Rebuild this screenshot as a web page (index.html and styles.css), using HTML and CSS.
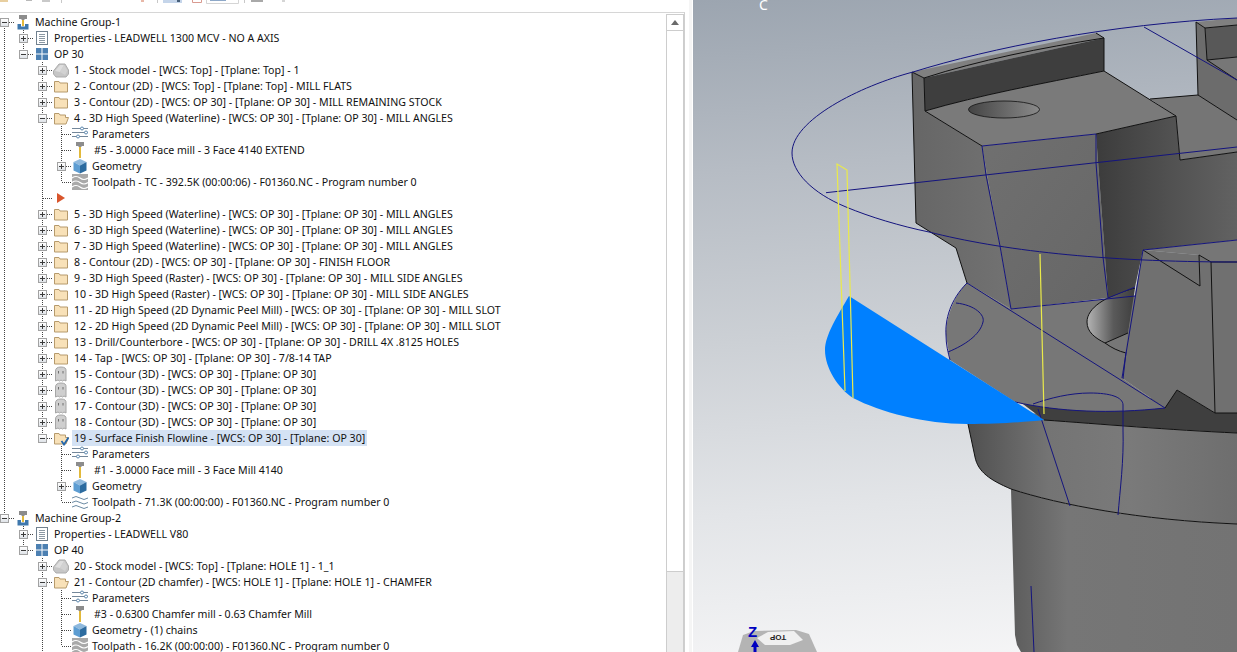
FILE: index.html
```html
<!DOCTYPE html>
<html lang="en">
<head>
<meta charset="utf-8">
<title>Toolpaths</title>
<link rel="stylesheet" href="styles.css">
</head>
<body>
<svg class="defs" width="0" height="0" aria-hidden="true">
  <symbol id="machine" viewBox="0 0 16 16"><path d="M4 1h8v4H9.500v1h-3V5H4z" fill="#8c8c8c"/><rect x="7" y="6" width="2" height="6" fill="#e2b93b"/><path d="M2.500 10H6v2.500h4V10h3.500v5.500h-11z" fill="#3f78ad"/></symbol>
  <symbol id="props" viewBox="0 0 16 16"><rect x="2.500" y="1.500" width="11" height="13" fill="#fff" stroke="#71818f"/><path d="M5 4.500h6M5 6.500h6M5 8.500h6M5 10.500h6M5 12.500h6" stroke="#8b98a3"/></symbol>
  <symbol id="op" viewBox="0 0 16 16"><path d="M2 2h5.500v5.500H2zM8.500 2H14v5.500H8.500zM2 8.500h5.500V14H2zM8.500 8.500H14V14H8.500z" fill="#4c80b2"/></symbol>
  <symbol id="stock" viewBox="0 0 16 16"><path d="M0.500 9 6 2h6l3.500 6v4L13 15H3l-2.500-3z" fill="#c6c6c6" stroke="#adadad"/><path d="M2 9 7 3h4l-4 7z" fill="#dedede"/><path d="M7 10l4-7 3.500 5.500L12 13z" fill="#d2d2d2"/></symbol>
  <symbol id="folder" viewBox="0 0 16 16"><path d="M1.500 14V3.500H6L7 5h7.500v9z" fill="#f8e1b8" stroke="#b69a6c"/></symbol>
  <symbol id="open" viewBox="0 0 16 16"><path d="M1.500 14V3.500H6L7 5h5.500v2.500h3L13 14z" fill="#f8e1b8" stroke="#b69a6c"/></symbol>
  <symbol id="check" viewBox="0 0 16 16"><path d="M1.500 14V3.500H6L7 5h5.500v2.500h3L13 14z" fill="#f8e1b8" stroke="#b69a6c"/><path d="M8.500 11l2.500 3.500 4.500-7" fill="none" stroke="#2467ad" stroke-width="1.800"/></symbol>
  <symbol id="params" viewBox="0 0 16 16"><path d="M0 2.500h16M0 6.500h16M0 10.500h16" stroke="#74879a"/><circle cx="10" cy="2.500" r="1.500" fill="#fff" stroke="#5c87ad"/><circle cx="14" cy="6.500" r="1.500" fill="#fff" stroke="#5c87ad"/><circle cx="6" cy="10.500" r="1.500" fill="#fff" stroke="#5c87ad"/></symbol>
  <symbol id="tool" viewBox="0 0 16 16"><path d="M4 0h8v4H9.500v1h-3V4H4z" fill="#8c8c8c"/><rect x="7" y="5" width="2" height="11" fill="#e2b93b"/></symbol>
  <symbol id="geo" viewBox="0 0 16 16"><path d="M1.500 4l6.500-3 6.500 3L8 7.500z" fill="#8fb9dd"/><path d="M1.500 4 8 7.500V15.500l-6.500-3z" fill="#5d9dd2"/><path d="M14.500 4 8 7.500V15.500l6.500-3z" fill="#2c6b9f"/></symbol>
  <symbol id="path" viewBox="0 0 16 16"><rect width="16" height="16" fill="#a9a9a9"/><path d="M0 4q4-3 8 0t8 0M0 8.500q4-3 8 0t8 0M0 13q4-3 8 0t8 0" fill="none" stroke="#fff" stroke-width="1.200"/></symbol>
  <symbol id="wave" viewBox="0 0 16 16"><path d="M0 4q4-3 8 0t8 0M0 8.500q4-3 8 0t8 0M0 13q4-3 8 0t8 0" fill="none" stroke="#6b8aa3"/></symbol>
  <symbol id="play" viewBox="0 0 16 16"><path d="M4 3l8 5-8 5z" fill="#d9552c"/></symbol>
  <symbol id="ghost" viewBox="0 0 16 16"><path d="M2.500 15V5q0-4 5.500-4t5 4v10l-2-1-1.500 1-1.500-1-1.500 1-1.500-1z" fill="#cfcfcf" stroke="#a6a6a6"/><path d="M5.500 5v2.500M10 5v2.500" stroke="#6e6e6e"/></symbol>
</svg>
<div class="app">
  <div class="side">
    <div class="pane">
      <svg class="toolbar" width="300" height="12" viewBox="0 0 300 12">
        <rect x="0" y="0" width="8" height="2" fill="#e8cfa0"/>
        <rect x="26" y="0" width="6" height="1" fill="#b9b9b9"/>
        <rect x="42" y="0" width="8" height="2" fill="#c9c9c9"/>
        <rect x="61" y="0" width="1" height="3" fill="#c8c8c8"/>
        <rect x="141" y="0" width="3" height="2" fill="#e8b8a8"/>
        <rect x="157" y="0" width="1" height="3" fill="#c8c8c8"/>
        <rect x="163" y="0" width="19" height="3" fill="#c5d5ea"/>
        <rect x="177" y="0" width="3" height="2" fill="#48607a"/>
        <path d="M192.500 0v2.500h9V0" fill="none" stroke="#d99a90"/>
        <path d="M206.500 0v3.500h32V0" fill="#fff" stroke="#d5d5d5"/>
        <rect x="210" y="0" width="16" height="1" fill="#8ea8c8"/>
        <rect x="244" y="0" width="1" height="3" fill="#c8c8c8"/>
        <rect x="251" y="0" width="12" height="2" fill="#a9a9a9"/>
        <rect x="282" y="0" width="3" height="2" fill="#d5d5d5"/>
      </svg>
      <div class="panel">
        <div class="tree">
          <div class="row"><span class="c top"><i class="x minus"></i></span><svg class="i"><use href="#machine"/></svg><span class="t">Machine Group-1</span></div>
          <div class="row"><span class="g"></span><span class="c tee"><i class="x plus"></i></span><svg class="i"><use href="#props"/></svg><span class="t">Properties - LEADWELL 1300 MCV - NO A AXIS</span></div>
          <div class="row"><span class="g"></span><span class="c ell"><i class="x minus"></i></span><svg class="i"><use href="#op"/></svg><span class="t">OP 30</span></div>
          <div class="row"><span class="g"></span><span class="n"></span><span class="c tee"><i class="x plus"></i></span><svg class="i"><use href="#stock"/></svg><span class="t">1 - Stock model - [WCS: Top] - [Tplane: Top] - 1</span></div>
          <div class="row"><span class="g"></span><span class="n"></span><span class="c tee"><i class="x plus"></i></span><svg class="i"><use href="#folder"/></svg><span class="t">2 - Contour (2D) - [WCS: Top] - [Tplane: Top] - MILL FLATS</span></div>
          <div class="row"><span class="g"></span><span class="n"></span><span class="c tee"><i class="x plus"></i></span><svg class="i"><use href="#folder"/></svg><span class="t">3 - Contour (2D) - [WCS: OP 30] - [Tplane: OP 30] - MILL REMAINING STOCK</span></div>
          <div class="row"><span class="g"></span><span class="n"></span><span class="c tee"><i class="x minus"></i></span><svg class="i"><use href="#open"/></svg><span class="t">4 - 3D High Speed (Waterline) - [WCS: OP 30] - [Tplane: OP 30] - MILL ANGLES</span></div>
          <div class="row"><span class="g"></span><span class="n"></span><span class="g"></span><span class="c tee"></span><svg class="i"><use href="#params"/></svg><span class="t">Parameters</span></div>
          <div class="row"><span class="g"></span><span class="n"></span><span class="g"></span><span class="c tee"></span><svg class="i"><use href="#tool"/></svg><span class="t tool">#5 - 3.0000 Face mill - 3 Face 4140 EXTEND</span></div>
          <div class="row"><span class="g"></span><span class="n"></span><span class="g"></span><span class="c tee"><i class="x plus"></i></span><svg class="i"><use href="#geo"/></svg><span class="t">Geometry</span></div>
          <div class="row"><span class="g"></span><span class="n"></span><span class="g"></span><span class="c ell"></span><svg class="i"><use href="#path"/></svg><span class="t">Toolpath - TC - 392.5K (00:00:06) - F01360.NC - Program number 0</span></div>
          <div class="row"><span class="g"></span><span class="n"></span><span class="c tee"></span><svg class="i"><use href="#play"/></svg></div>
          <div class="row"><span class="g"></span><span class="n"></span><span class="c tee"><i class="x plus"></i></span><svg class="i"><use href="#folder"/></svg><span class="t">5 - 3D High Speed (Waterline) - [WCS: OP 30] - [Tplane: OP 30] - MILL ANGLES</span></div>
          <div class="row"><span class="g"></span><span class="n"></span><span class="c tee"><i class="x plus"></i></span><svg class="i"><use href="#folder"/></svg><span class="t">6 - 3D High Speed (Waterline) - [WCS: OP 30] - [Tplane: OP 30] - MILL ANGLES</span></div>
          <div class="row"><span class="g"></span><span class="n"></span><span class="c tee"><i class="x plus"></i></span><svg class="i"><use href="#folder"/></svg><span class="t">7 - 3D High Speed (Waterline) - [WCS: OP 30] - [Tplane: OP 30] - MILL ANGLES</span></div>
          <div class="row"><span class="g"></span><span class="n"></span><span class="c tee"><i class="x plus"></i></span><svg class="i"><use href="#folder"/></svg><span class="t">8 - Contour (2D) - [WCS: OP 30] - [Tplane: OP 30] - FINISH FLOOR</span></div>
          <div class="row"><span class="g"></span><span class="n"></span><span class="c tee"><i class="x plus"></i></span><svg class="i"><use href="#folder"/></svg><span class="t">9 - 3D High Speed (Raster) - [WCS: OP 30] - [Tplane: OP 30] - MILL SIDE ANGLES</span></div>
          <div class="row"><span class="g"></span><span class="n"></span><span class="c tee"><i class="x plus"></i></span><svg class="i"><use href="#folder"/></svg><span class="t">10 - 3D High Speed (Raster) - [WCS: OP 30] - [Tplane: OP 30] - MILL SIDE ANGLES</span></div>
          <div class="row"><span class="g"></span><span class="n"></span><span class="c tee"><i class="x plus"></i></span><svg class="i"><use href="#folder"/></svg><span class="t">11 - 2D High Speed (2D Dynamic Peel Mill) - [WCS: OP 30] - [Tplane: OP 30] - MILL SLOT</span></div>
          <div class="row"><span class="g"></span><span class="n"></span><span class="c tee"><i class="x plus"></i></span><svg class="i"><use href="#folder"/></svg><span class="t">12 - 2D High Speed (2D Dynamic Peel Mill) - [WCS: OP 30] - [Tplane: OP 30] - MILL SLOT</span></div>
          <div class="row"><span class="g"></span><span class="n"></span><span class="c tee"><i class="x plus"></i></span><svg class="i"><use href="#folder"/></svg><span class="t">13 - Drill/Counterbore - [WCS: OP 30] - [Tplane: OP 30] - DRILL 4X .8125 HOLES</span></div>
          <div class="row"><span class="g"></span><span class="n"></span><span class="c tee"><i class="x plus"></i></span><svg class="i"><use href="#folder"/></svg><span class="t">14 - Tap - [WCS: OP 30] - [Tplane: OP 30] - 7/8-14 TAP</span></div>
          <div class="row"><span class="g"></span><span class="n"></span><span class="c tee"><i class="x plus"></i></span><svg class="i"><use href="#ghost"/></svg><span class="t">15 - Contour (3D) - [WCS: OP 30] - [Tplane: OP 30]</span></div>
          <div class="row"><span class="g"></span><span class="n"></span><span class="c tee"><i class="x plus"></i></span><svg class="i"><use href="#ghost"/></svg><span class="t">16 - Contour (3D) - [WCS: OP 30] - [Tplane: OP 30]</span></div>
          <div class="row"><span class="g"></span><span class="n"></span><span class="c tee"><i class="x plus"></i></span><svg class="i"><use href="#ghost"/></svg><span class="t">17 - Contour (3D) - [WCS: OP 30] - [Tplane: OP 30]</span></div>
          <div class="row"><span class="g"></span><span class="n"></span><span class="c tee"><i class="x plus"></i></span><svg class="i"><use href="#ghost"/></svg><span class="t">18 - Contour (3D) - [WCS: OP 30] - [Tplane: OP 30]</span></div>
          <div class="row"><span class="g"></span><span class="n"></span><span class="c ell"><i class="x minus"></i></span><svg class="i"><use href="#check"/></svg><span class="t sel">19 - Surface Finish Flowline - [WCS: OP 30] - [Tplane: OP 30]</span></div>
          <div class="row"><span class="g"></span><span class="n"></span><span class="n"></span><span class="c tee"></span><svg class="i"><use href="#params"/></svg><span class="t">Parameters</span></div>
          <div class="row"><span class="g"></span><span class="n"></span><span class="n"></span><span class="c tee"></span><svg class="i"><use href="#tool"/></svg><span class="t tool">#1 - 3.0000 Face mill - 3 Face Mill 4140</span></div>
          <div class="row"><span class="g"></span><span class="n"></span><span class="n"></span><span class="c tee"><i class="x plus"></i></span><svg class="i"><use href="#geo"/></svg><span class="t">Geometry</span></div>
          <div class="row"><span class="g"></span><span class="n"></span><span class="n"></span><span class="c ell"></span><svg class="i"><use href="#wave"/></svg><span class="t">Toolpath - 71.3K (00:00:00) - F01360.NC - Program number 0</span></div>
          <div class="row"><span class="c ell"><i class="x minus"></i></span><svg class="i"><use href="#machine"/></svg><span class="t">Machine Group-2</span></div>
          <div class="row"><span class="n"></span><span class="c tee"><i class="x plus"></i></span><svg class="i"><use href="#props"/></svg><span class="t">Properties - LEADWELL V80</span></div>
          <div class="row"><span class="n"></span><span class="c ell"><i class="x minus"></i></span><svg class="i"><use href="#op"/></svg><span class="t">OP 40</span></div>
          <div class="row"><span class="n"></span><span class="n"></span><span class="c tee"><i class="x plus"></i></span><svg class="i"><use href="#stock"/></svg><span class="t">20 - Stock model - [WCS: Top] - [Tplane: HOLE 1] - 1_1</span></div>
          <div class="row"><span class="n"></span><span class="n"></span><span class="c tee"><i class="x minus"></i></span><svg class="i"><use href="#open"/></svg><span class="t">21 - Contour (2D chamfer) - [WCS: HOLE 1] - [Tplane: HOLE 1] - CHAMFER</span></div>
          <div class="row"><span class="n"></span><span class="n"></span><span class="g"></span><span class="c tee"></span><svg class="i"><use href="#params"/></svg><span class="t">Parameters</span></div>
          <div class="row"><span class="n"></span><span class="n"></span><span class="g"></span><span class="c tee"></span><svg class="i"><use href="#tool"/></svg><span class="t tool">#3 - 0.6300 Chamfer mill - 0.63 Chamfer Mill</span></div>
          <div class="row"><span class="n"></span><span class="n"></span><span class="g"></span><span class="c tee"></span><svg class="i"><use href="#geo"/></svg><span class="t">Geometry - (1) chains</span></div>
          <div class="row"><span class="n"></span><span class="n"></span><span class="g"></span><span class="c ell"></span><svg class="i"><use href="#path"/></svg><span class="t">Toolpath - 16.2K (00:00:00) - F01360.NC - Program number 0</span></div>
        </div>
        <div class="scrollbar">
          <div class="sb-up"><i class="sb-arrow"></i></div>
          <div class="sb-thumb"></div>
          <div class="sb-track"></div>
        </div>
      </div>
    </div>
    <div class="gutter"><div class="gutter-line"></div></div>
  </div>
  <div class="view">
    <svg class="scene" viewBox="693 0 544 652" width="544" height="652">
      <defs>
        <linearGradient id="holeA" x1="0" x2="1" y1="0" y2="0"><stop offset="0" stop-color="#444"/><stop offset="1" stop-color="#8a8a8a"/></linearGradient>
        <linearGradient id="holeB" x1="0" x2="1" y1="0" y2="0"><stop offset="0" stop-color="#b4b4b4"/><stop offset=".55" stop-color="#5a5a5a"/><stop offset="1" stop-color="#3e3e3e"/></linearGradient>
        <linearGradient id="darkFace" x1="0" x2="1" y1="0" y2="0"><stop offset="0" stop-color="#3c3c3c"/><stop offset=".5" stop-color="#505050"/><stop offset="1" stop-color="#626262"/></linearGradient>
        <linearGradient id="leftFace" x1="0" x2="1" y1="0" y2="0"><stop offset="0" stop-color="#666"/><stop offset="1" stop-color="#727272"/></linearGradient>
        <linearGradient id="frontFace" x1="0" x2="1" y1="0" y2="1"><stop offset="0" stop-color="#707070"/><stop offset="1" stop-color="#666"/></linearGradient>
        <linearGradient id="collar" x1="968" x2="1237" y1="0" y2="0" gradientUnits="userSpaceOnUse"><stop offset="0" stop-color="#505050"/><stop offset=".3" stop-color="#747474"/><stop offset=".6" stop-color="#7a7a7a"/><stop offset="1" stop-color="#6e6e6e"/></linearGradient>
        <linearGradient id="barrel" x1="1011" x2="1237" y1="0" y2="0" gradientUnits="userSpaceOnUse"><stop offset="0" stop-color="#5c5c5c"/><stop offset=".25" stop-color="#767676"/><stop offset="1" stop-color="#737373"/></linearGradient>
      </defs>

      <path d="M1021 652 1017 645 1015 635 1011 489C1060 505 1140 520 1237 524V652Z" fill="url(#barrel)"/>
      <path d="M968 424 975 457C978 472 990 480 1011 489 1060 505 1140 520 1237 524V433L1044 412Z" fill="url(#collar)"/>
      <path d="M1011 489C1060 505 1140 520 1237 524" class="edge"/>
      <path d="M968 424 975 457C978 472 990 480 1011 489" class="edge"/>
      <path d="M1015 398H1165L1177 390 1215 413H1237V433C1150 428 1080 422 1044 420Z" fill="#3f3f3f"/>
      <path d="M1044 420C1100 424 1170 430 1237 433" class="edge"/>

      <path d="M967 283 1011 309 1135 296 1122 378 1165 408C1110 414 1060 412 1015 402L950 360 946 335C946 315 955 295 967 283Z" fill="#777"/>
      <path d="M1135 288C1105 296 1087 308 1087 322 1087 332 1095 338 1105 343L1128 333Z" fill="url(#holeB)"/>
      <path d="M1135 288C1105 296 1087 308 1087 322 1087 332 1095 338 1105 343 1112 348 1118 351 1126 353M1105 343 1128 333" class="edge"/>

      <path d="M912 72 924 78 925 111 982 146 1011 309 967 283 956 248 916 223Z" fill="url(#leftFace)"/>
      <path d="M982 146 1096 134 1108 298 1011 309Z" fill="url(#frontFace)"/>
      <path d="M1096 134 1176 116 1180 160 1237 152V240L1143 250 1135 287 1108 298Z" fill="url(#darkFace)"/>
      <path d="M1150 99 1198 95 1237 120V152L1180 160 1176 116Z" fill="#757575"/>
      <path d="M1196 22 1198 95 1237 120V80L1207 60 1205 28Z" fill="#6c6c6c"/>
      <path d="M1205 28 1237 25V57L1207 60Z" fill="#585858"/>
      <path d="M1196 22 1205 28 1237 25V18Z" fill="#808080"/>
      <path d="M1207 60 1237 57V80Z" fill="#777"/>
      <path d="M912 72 924 78 1104 38 1096 33Z" fill="#808080"/>
      <path d="M924 78 1104 38V71C1040 84 980 95 925 111Z" fill="#3e3e3e"/>
      <path d="M925 111C980 95 1040 84 1104 71L1176 116 1096 134 982 146Z" fill="#7a7a7a"/>
      <ellipse cx="1004" cy="109.500" rx="35.500" ry="8.500" fill="url(#holeA)" stroke="#111" stroke-width=".8"/>
      <path d="M1143 250 1237 240V262H1211L1199 255Z" fill="#767676"/>
      <path d="M1143 250 1199 255 1211 262H1237V413H1215L1177 390 1165 408 1122 378 1128 333Z" fill="#707070"/>

      <path class="edge" d="M912 72 916 223 956 248 967 283M912 72 924 78 925 111 982 146M924 78C980 60 1040 48 1104 38L1096 33M1104 38V71L1176 116 1180 160 1237 152M925 111C980 95 1040 84 1104 71M1096 134 1176 116M1150 99 1198 95 1237 120M1196 22 1198 95M1196 22 1205 28 1207 60 1237 80M1205 28 1237 25M1207 60 1237 57M1143 250 1200 286 1199 255 1211 262H1237M1211 262 1215 413 1177 390 1165 408M1215 413H1237"/>

      <path class="navy" d="M1237 18C1110 24 990 48 913 72 860 86 792 120 792 153 792 172 812 193 846 207 870 217 900 226 929 232 1000 250 1100 262 1237 262"/>
      <path class="navy" d="M826 192.700 1237 147M1144 27 1237 80M982 146 1096 134M982 146 986 175 1000 246 1011 309M1096 134 1096 163 1103 257 1108 298 1135 287M1011 309 1135 296M967 283 1165 408M1143 250 1122 378M1143 250 1237 240"/>
      <path class="navy" d="M967 283C950 300 945 320 946 335 946 345 948 352 950 360M956 303C975 305 985 315 983 322 980 335 965 345 948 352"/>
      <path class="navy" d="M1015 402C1060 412 1110 414 1165 408M1033 404C1050 398 1070 393 1090 393 1110 393 1123 397 1123 405V430C1124 460 1120 490 1118 515M1038 409 1070 506M1031 586 1034 652M1123 379 1126 352"/>

      <path d="M849 296C838 315 825 335 825 350 825 368 838 388 853 398 880 412 925 424 967 424 1000 424 1025 422 1044 420Z" fill="#0080ff"/>
      <path class="yellow" d="M845 391 837 164 847 170 853 398M1040 254 1044 414"/>

      <path d="M738 652 743 635 754 631 796 630 809 634 817 652Z" fill="#b4b4b4"/>
      <path d="M757 638 768 632 794 631 803 640 790 645H765Z" fill="#f0f0f0"/>
      <text class="cube-label" transform="rotate(180 778 638)" x="778" y="641">TOP</text>
      <path d="M755 640 751 647H753.500V652H756.500V647H759Z" fill="#0000c0"/>
      <text class="axis" x="748" y="637">Z</text>
      <text class="corner" x="759" y="10">C</text>
    </svg>
  </div>
</div>
</body>
</html>
```

FILE: styles.css
```css
html, body {
  margin: 0;
  height: 100%;
  overflow: hidden;
  background: #fff;
}

.defs { display: block; height: 0; }

.app {
  display: flex;
  width: 1237px;
  height: 652px;
  overflow: hidden;
  font-family: "Noto Sans", sans-serif;
  font-size: 10.6px;
  color: #111;
}

.side { display: flex; width: 693px; flex: none; }

.pane {
  display: flex;
  flex-direction: column;
  width: 685px;
}

.toolbar { display: block; flex: none; }

.panel {
  display: flex;
  flex: 1;
  min-height: 0;
  border-top: 1px solid #d6d6d6;
  border-right: 1px solid #cfcfcf;
  padding-top: 1px;
}

.gutter { width: 8px; padding-left: 4px; box-sizing: border-box; }
.gutter-line { width: 3px; height: 100%; background: #f5f5f5; }

.tree { flex: 1; min-width: 0; overflow: hidden; }

.row {
  display: flex;
  align-items: center;
  height: 16px;
  white-space: nowrap;
}

.g, .n, .c { position: relative; flex: none; height: 16px; }
.g, .n { width: 19px; }
.c { width: 15px; }

.g, .c::before {
  background: repeating-linear-gradient(to bottom, #444 0 1px, transparent 1px 2px) 4px 0 / 1px 100% no-repeat;
}

.c::before {
  content: "";
  position: absolute;
  inset: 0 auto 0 0;
  width: 5px;
}
.c.ell::before { bottom: 8px; }
.c.top::before { top: 8px; }

.c::after {
  content: "";
  position: absolute;
  left: 5px;
  right: 0;
  top: 8px;
  height: 1px;
  background: repeating-linear-gradient(to right, #444 0 1px, transparent 1px 2px);
}

.x {
  position: absolute;
  z-index: 1;
  left: 0;
  top: 4px;
  box-sizing: border-box;
  width: 9px;
  height: 9px;
  border: 1px solid #a2a2a2;
  background: linear-gradient(#fff, #dfe3e8);
}
.x::before {
  content: "";
  position: absolute;
  left: 1px;
  top: 3px;
  width: 5px;
  height: 1px;
  background: #3a3a3a;
}
.plus::after {
  content: "";
  position: absolute;
  left: 3px;
  top: 1px;
  width: 1px;
  height: 5px;
  background: #3a3a3a;
}

.i { flex: none; width: 16px; height: 16px; }

.t {
  margin-left: 2px;
  padding: 0 2px;
  line-height: 16px;
}
.c:nth-child(3) ~ .t { margin-left: 3px; }
.tool { margin-left: 4px; }
.sel { background: #d4e2f4; }

.scrollbar {
  display: flex;
  flex-direction: column;
  flex: none;
  box-sizing: border-box;
  width: 18px;
  border-left: 1px solid #cdcdcd;
  border-right: 1px solid #cdcdcd;
}
.sb-up {
  display: flex;
  align-items: center;
  justify-content: center;
  flex: none;
  height: 17px;
  background: #fff;
  box-sizing: border-box;
  border-top: 1px solid #cdcdcd;
  border-bottom: 1px solid #cdcdcd;
}
.sb-arrow {
  border-left: 4px solid transparent;
  border-right: 4px solid transparent;
  border-bottom: 5px solid #6a6a6a;
}
.sb-thumb {
  flex: none;
  height: 541px;
  box-sizing: border-box;
  background: #fff;
  border-bottom: 1px solid #cdcdcd;
}
.sb-track { flex: 1; background: #ededed; }

.view {
  flex: 1;
  min-width: 0;
  background: linear-gradient(176deg, #9ca5b0 0%, #b6bcc4 25%, #ccd0d5 50%, #e3e5e8 75%, #f6f6f7 100%);
}

.scene { display: block; }

.edge { fill: none; stroke: #111; stroke-width: 1; }
.navy { fill: none; stroke: #14147e; stroke-width: 1; }
.yellow { fill: none; stroke: #eaea4a; stroke-width: 1.200; }

.corner {
  font-family: "Noto Sans", sans-serif;
  font-size: 14px;
  fill: #fff;
}
.axis {
  font-family: "Liberation Sans", sans-serif;
  font-size: 15px;
  font-weight: 700;
  fill: #0000c0;
}
.cube-label {
  font-family: "Liberation Sans", sans-serif;
  font-size: 8px;
  font-weight: 700;
  text-anchor: middle;
  fill: #222;
}
```
